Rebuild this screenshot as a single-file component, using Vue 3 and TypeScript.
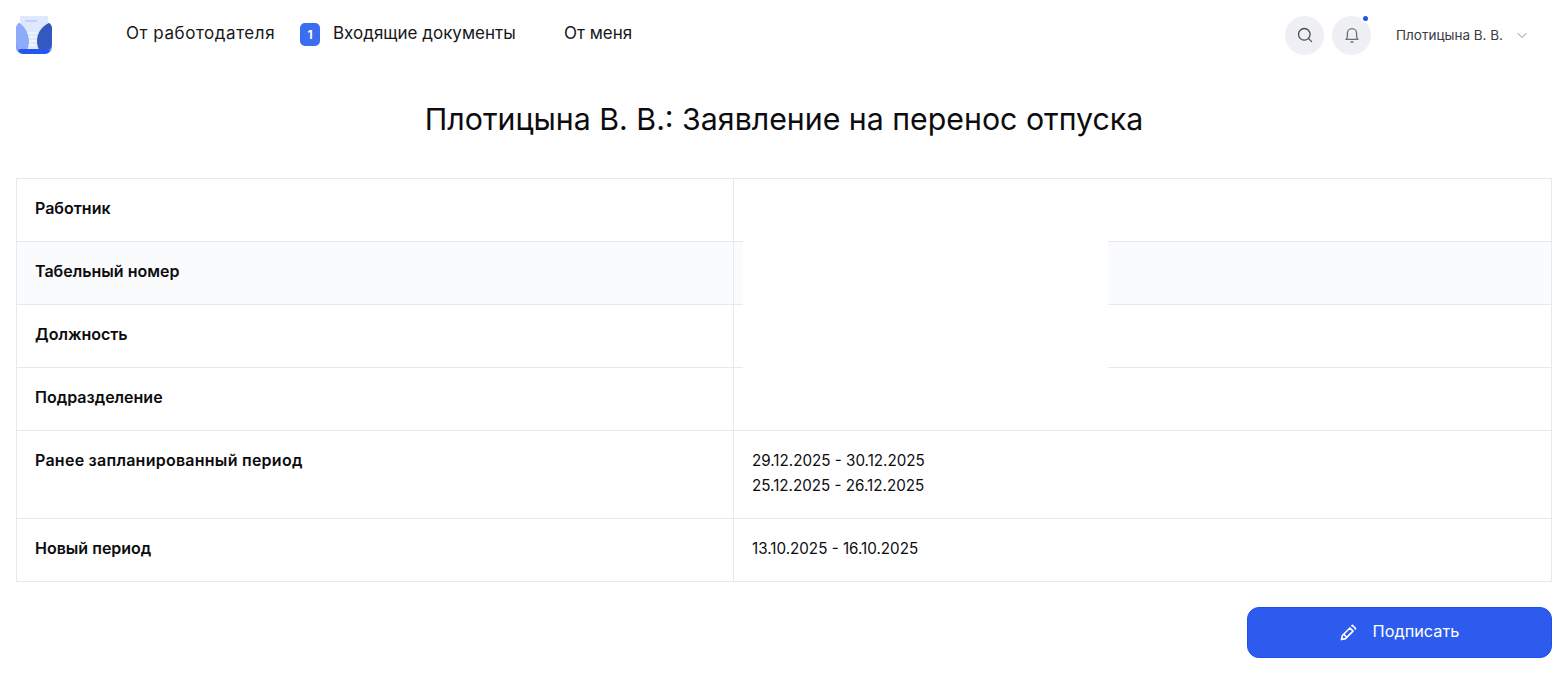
<script setup lang="ts">
const navItems = [
  { label: "От работодателя", badge: 0 },
  { label: "Входящие документы", badge: 1 },
  { label: "От меня", badge: 0 },
];

const rows = [
  { label: "Работник", lines: [] as string[] },
  { label: "Табельный номер", lines: [] as string[] },
  { label: "Должность", lines: [] as string[] },
  { label: "Подразделение", lines: [] as string[] },
  {
    label: "Ранее запланированный период",
    lines: ["29.12.2025 - 30.12.2025", "25.12.2025 - 26.12.2025"],
  },
  { label: "Новый период", lines: ["13.10.2025 - 16.10.2025"] },
];
</script>

<template>
  <div class="page">
    <header class="header">
      <svg class="logo" width="36" height="38" viewBox="0 0 36 38">
        <rect x="0" y="6" width="36" height="32" rx="7" fill="#6f94f4" />
        <path d="M4 0h28v27l-5 8H9l-5-8z" fill="#dfe8fd" />
        <path d="M9 5h12" stroke="#b9ccfa" stroke-width="1.5" />
        <path d="M10 17h16M10 21h16M10 25h16M10 29h16" stroke="#f2f6ff" stroke-width="1.5" />
        <path d="M0 14c0-3 1-6 3-7 6 3 9 10 10 17 0 5-1 9-3 11H7a7 7 0 0 1-7-7z" fill="#8cabf8" />
        <path d="M36 13c0-3-1-5-3-6-7 3-12 10-12 18 0 4 1 8 3 10h5a7 7 0 0 0 7-7z" fill="#3358c0" />
        <path d="M4 33h28l2 2a7 7 0 0 1-5 3H7a7 7 0 0 1-5-3z" fill="#2457f0" />
      </svg>
      <nav class="nav">
        <a v-for="item in navItems" :key="item.label" class="nav-item">
          <span v-if="item.badge" class="badge">{{ item.badge }}</span>
          {{ item.label }}
        </a>
      </nav>
      <div class="actions">
        <button class="round-btn" aria-label="Поиск">
          <svg width="18" height="18" viewBox="0 0 18 18" fill="none" stroke="#4a4d55" stroke-width="1.3" stroke-linecap="round">
            <circle cx="8.3" cy="8.3" r="5.8" />
            <path d="M12.6 12.6l3 3" />
          </svg>
        </button>
        <button class="round-btn bell" aria-label="Уведомления">
          <svg width="18" height="18" viewBox="0 0 18 18" fill="none" stroke="#6b6e76" stroke-width="1.3" stroke-linecap="round" stroke-linejoin="round">
            <path d="M3 13.4c1-.9 1.4-1.7 1.4-3.2V7.3a4.6 4.6 0 0 1 9.2 0v2.9c0 1.5.4 2.3 1.4 3.2z" />
            <path d="M8 16h2" />
          </svg>
          <span class="dot"></span>
        </button>
        <div class="user">
          <span>Плотицына В. В.</span>
          <svg width="10" height="7" viewBox="0 0 10 7" fill="none" stroke="#8a8d94" stroke-width="1">
            <path d="M.7 1.2L5 5.5l4.3-4.3" />
          </svg>
        </div>
      </div>
    </header>

    <h1 class="title">Плотицына В. В.: Заявление на перенос отпуска</h1>

    <div class="table-wrap">
      <table class="info">
        <tbody>
          <tr v-for="row in rows" :key="row.label">
            <th>{{ row.label }}</th>
            <td>
              <div v-for="line in row.lines" :key="line">{{ line }}</div>
            </td>
          </tr>
        </tbody>
      </table>
      <div class="mask"></div>
    </div>

    <div class="footer">
      <button class="sign">
        <svg class="sign-icon" width="17" height="17" viewBox="0 0 18 18" fill="none" stroke="#fff" stroke-width="1.7" stroke-linejoin="round">
          <path d="M1.5 16.5l1-4.3 8-8 3.3 3.3-8 8z" />
          <path d="M4 10.8l3.3 3.3M12.2 2.5l1-1 3.3 3.3-1 1" />
        </svg>
        Подписать
      </button>
    </div>
  </div>
</template>

<style scoped>
.page {
  font-family: "Inter", "Noto Sans", sans-serif;
  color: #0c0c0f;
  padding: 0 16px;
}

.header {
  display: flex;
  align-items: center;
  height: 66px;
}

.logo {
  flex: none;
  margin-top: 3px;
}

.nav {
  display: flex;
  margin-left: 74px;
}

.nav-item {
  display: flex;
  align-items: center;
  font-size: 17px;
  white-space: nowrap;
  color: #17171a;
}

.nav-item:nth-child(1) {
  width: 174px;
  letter-spacing: 0.55px;
}

.nav-item:nth-child(2) {
  width: 264px;
}

.badge {
  width: 20px;
  height: 23px;
  margin-top: 3px;
  margin-right: 13px;
  border-radius: 5px;
  background: #3a6df0;
  color: #fff;
  font-size: 12px;
  font-weight: 700;
  display: flex;
  align-items: center;
  justify-content: center;
}

.actions {
  margin-left: auto;
  margin-top: 4px;
  display: flex;
  align-items: center;
  gap: 8px;
  padding-right: 25px;
}

.round-btn {
  position: relative;
  width: 39px;
  height: 39px;
  padding: 0;
  border: 0;
  border-radius: 50%;
  background: #eff0f4;
  display: flex;
  align-items: center;
  justify-content: center;
}

.dot {
  position: absolute;
  top: 0;
  right: 3px;
  width: 5px;
  height: 5px;
  border-radius: 50%;
  background: #1f55ea;
  box-shadow: 0 0 0 2px #fff;
}

.user {
  display: flex;
  align-items: center;
  gap: 14px;
  margin-left: 17px;
  font-size: 13.5px;
  color: #3a3c42;
}

.title {
  margin: 31px 0 37px;
  text-align: center;
  font-size: 30.3px;
  line-height: 44px;
  font-weight: 400;
}

.table-wrap {
  position: relative;
}

.info {
  width: 100%;
  border-collapse: collapse;
  table-layout: fixed;
  font-size: 15.2px;
  line-height: 25px;
}

.info th,
.info td {
  border: 1px solid #e8e9ec;
  padding: 16.5px 18px 20.5px;
  height: 25px;
  text-align: left;
  vertical-align: top;
}

.info th {
  width: 680px;
  font-size: 16px;
  font-weight: 600;
}

.info tr:nth-child(5) th {
  letter-spacing: 0.25px;
}

.info td {
  font-weight: 400;
}

.info tr:nth-child(2) {
  background: #fafbfd;
}

.mask {
  position: absolute;
  left: 727px;
  top: 1px;
  width: 365px;
  height: 192px;
  background: #fff;
}

.footer {
  display: flex;
  justify-content: flex-end;
  margin-top: 25px;
}

.sign {
  width: 305px;
  height: 51px;
  padding: 0 0 3px;
  border: 1px solid #1f4fe8;
  border-radius: 12px;
  background: #2d5bed;
  color: #fff;
  font: inherit;
  font-size: 16.3px;
  display: flex;
  align-items: center;
  justify-content: center;
  gap: 16px;
}

.sign-icon {
  margin-top: 3px;
}
</style>
